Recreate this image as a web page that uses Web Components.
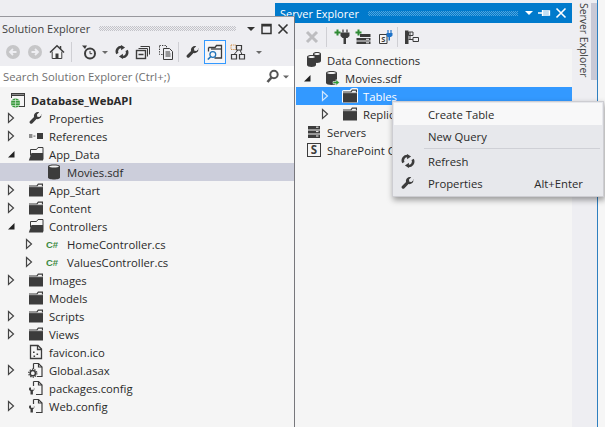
<!DOCTYPE html>
<html>
<head>
<meta charset="utf-8">
<title>Solution Explorer</title>
<style>
  html, body { margin: 0; padding: 0; height: 100%; overflow: hidden; background: #eeeef2; }
  body { font: 11.3px "Open Sans", "Liberation Sans", sans-serif; color: #2a2a2a; }
</style>
</head>
<body>
<vs-desktop>
  <vs-pane slot="server" heading="Server Explorer" active pins="pin">
    <tool-bar slot="toolbar" lead="26" top="2">
      <tool-btn icon="x-gray"></tool-btn>
      <tool-sep></tool-sep>
      <tool-btn icon="plug-add" style="margin-left:2px"></tool-btn>
      <tool-btn icon="server-add" style="margin-left:-1px"></tool-btn>
      <tool-btn icon="sp-plug"></tool-btn>
      <tool-sep style="margin-left:1px"></tool-sep>
      <tool-btn icon="hierarchy" style="margin-left:1px"></tool-btn>
    </tool-bar>
    <tree-view lead="21" top="2">
      <tree-row depth="-1" icon="dbs">Data Connections</tree-row>
      <tree-row depth="0" arrow="open" icon="db-link">Movies.sdf</tree-row>
      <tree-row depth="1" arrow="closed" icon="folder" selected="blue">Tables</tree-row>
      <tree-row depth="1" arrow="closed" icon="folder">Replication</tree-row>
      <tree-row depth="-1" icon="servers">Servers</tree-row>
      <tree-row depth="-1" icon="sharepoint">SharePoint Connections</tree-row>
    </tree-view>
  </vs-pane>

  <vs-pane slot="solution" heading="Solution Explorer" pins="max">
    <tool-bar slot="toolbar" lead="2" top="0">
      <tool-btn icon="back"></tool-btn>
      <tool-btn icon="forward"></tool-btn>
      <tool-btn icon="home"></tool-btn>
      <tool-sep></tool-sep>
      <tool-btn icon="history" style="margin-left:4px"></tool-btn>
      <tool-drop></tool-drop>
      <tool-btn icon="sync" style="margin-left:1px"></tool-btn>
      <tool-btn icon="collapse" style="margin-left:-1px"></tool-btn>
      <tool-btn icon="show-all" style="margin-left:1px"></tool-btn>
      <tool-sep style="margin-left:1px"></tool-sep>
      <tool-btn icon="wrench" style="margin-left:1px"></tool-btn>
      <tool-btn icon="folder-search" active></tool-btn>
      <tool-btn icon="diagram" style="margin-left:1px"></tool-btn>
      <tool-drop style="margin-left:5px"></tool-drop>
    </tool-bar>
    <search-box slot="toolbar">Search Solution Explorer (Ctrl+;)</search-box>
    <tree-view lead="0" top="4">
      <tree-row depth="-1" icon="project" bold>Database_WebAPI</tree-row>
      <tree-row depth="0" arrow="closed" icon="wrench">Properties</tree-row>
      <tree-row depth="0" arrow="closed" icon="refs">References</tree-row>
      <tree-row depth="0" arrow="open" icon="folder-open">App_Data</tree-row>
      <tree-row depth="1" icon="db" selected="gray">Movies.sdf</tree-row>
      <tree-row depth="0" arrow="closed" icon="folder">App_Start</tree-row>
      <tree-row depth="0" arrow="closed" icon="folder">Content</tree-row>
      <tree-row depth="0" arrow="open" icon="folder-open">Controllers</tree-row>
      <tree-row depth="1" arrow="closed" icon="csharp">HomeController.cs</tree-row>
      <tree-row depth="1" arrow="closed" icon="csharp">ValuesController.cs</tree-row>
      <tree-row depth="0" arrow="closed" icon="folder">Images</tree-row>
      <tree-row depth="0" icon="folder">Models</tree-row>
      <tree-row depth="0" arrow="closed" icon="folder">Scripts</tree-row>
      <tree-row depth="0" arrow="closed" icon="folder">Views</tree-row>
      <tree-row depth="0" icon="page">favicon.ico</tree-row>
      <tree-row depth="0" arrow="closed" icon="page-gear">Global.asax</tree-row>
      <tree-row depth="0" icon="page-wrench">packages.config</tree-row>
      <tree-row depth="0" arrow="closed" icon="page-wrench">Web.config</tree-row>
    </tree-view>
  </vs-pane>

  <context-menu slot="menu">
    <menu-item hot>Create Table</menu-item>
    <menu-item>New Query</menu-item>
    <menu-sep></menu-sep>
    <menu-item icon="sync">Refresh</menu-item>
    <menu-item icon="wrench" shortcut="Alt+Enter">Properties</menu-item>
  </context-menu>
</vs-desktop>

<script>
const DARK = '#3c3c3c';
const WRENCH = 'M14.8 4.2l-2.7 2.7-2.5-.5-.5-2.5 2.7-2.7c-1.7-.6-3.6-.2-4.9 1.1-1.2 1.2-1.6 2.9-1.2 4.4L1 11.4c-.8.8-.8 2 0 2.8s2 .8 2.8 0l4.8-4.9c1.5.4 3.2 0 4.4-1.2 1.3-1.3 1.7-3.2 1.1-4.9z';
const SYNC = `<g transform="translate(.8 .8) scale(.9)"><path d="M8.2 2.6a5 5 0 0 0-5.4 7.2" fill="none" stroke="${DARK}" stroke-width="2.8"/><path d="M7.8 13.4a5 5 0 0 0 5.4-7.2" fill="none" stroke="${DARK}" stroke-width="2.8"/><path d="M7 .2l4.4 2.9L7 6zM9 10l-4.4 2.9L9 15.8z" fill="${DARK}"/></g>`;
const PAGE = `<path d="M2.5 1.500h7.500l3.500 3.500v9.500h-11z" fill="#f5f5f5" stroke="${DARK}" stroke-width="1.300"/><path d="M9.500 1.500V5.500H13.500" fill="none" stroke="${DARK}" stroke-width="1.300"/>`;
const CYL = (x, y, w, h) => `<path d="M${x} ${y + 2}c0-2.6 ${w}-2.6 ${w} 0v${h - 4}c0 2.6-${w} 2.6-${w} 0z" fill="${DARK}"/><path d="M${x + 1.2} ${y + 2}c.6-1.3 ${w - 2.4}-1.3 ${w - 2.4} 0s-${w - 2.4} 1.3-${w - 2.4} 0z" fill="#f2f2f2"/>`;
const PLUS = (x, y) => `<path d="M${x} ${y - 3}v6M${x - 3} ${y}h6" stroke="#2f8a34" stroke-width="2"/>`;

const ICONS = {
  folder: `<path d="M1 3.5h7.5L10 1.5h5v13H1z" fill="${DARK}"/><path d="M9.4 4.4l1.1-1.7h3.4v1.7z" fill="#f5f5f5"/><path d="M1 4.7h14" stroke="#f5f5f5" stroke-width=".6"/>`,
  'folder-open': `<path d="M2.5 3.5h6L10 1.5h5v12" fill="#f5f5f5" stroke="${DARK}"/><path d="M3.5 7h11.5v7.5H.8z" fill="${DARK}"/><path d="M2.5 3.5v6" stroke="${DARK}"/>`,
  db: CYL(2, 0.5, 12, 15),
  dbs: CYL(7, 0, 8, 11) + CYL(1, 3, 9, 12),
  'db-link': CYL(2, 1, 11, 14) + `<path d="M9 11.5h3V9.5l3.5 3-3.5 3v-2H9z" fill="#2f9a34" stroke="#f5f5f5" stroke-width=".6"/>`,
  servers: `<path d="M2 2h12v3.4H2zM2 6.4h12v3.2H2zM2 10.6h12V14H2z" fill="${DARK}"/><path d="M10 3.2h2.5M10 7.6h2.5M10 12h2.5" stroke="#f5f5f5"/>`,
  sharepoint: `<rect x="1.5" y="1.5" width="13" height="13" fill="#f5f5f5" stroke="${DARK}"/><text x="8" y="12.4" font-size="11.5" font-weight="700" text-anchor="middle" fill="${DARK}" font-family="Open Sans">S</text>`,
  csharp: `<text x="0" y="12" font-size="9.5" font-weight="700" fill="#3b8a3f" font-family="Liberation Sans">C#</text>`,
  project: `<path d="M1 1h14v14H9v-1h5V4H2v2H1z" fill="${DARK}"/><path d="M2 2h12v1H2z" fill="#8a8a8a"/><circle cx="5.5" cy="11" r="4.6" fill="#3a9a3e"/><path d="M1 11h9M5.5 6.5v9M2 8.500h7M2 13.500h7" stroke="#d4ecd4" stroke-width=".7"/>`,
  wrench: `<path transform="translate(1.200 1.200) scale(.85)" d="${WRENCH}" fill="${DARK}"/>`,
  refs: `<path d="M1 6h3.4v4H1z" fill="#8c8c8c"/><path d="M5.4 7.5h2v1.2h-2z" fill="#777"/><path d="M9 5h6v6H9z" fill="${DARK}"/>`,
  page: PAGE + `<path d="M5 7.500h1.600v1.600H5zM8.500 9.500h1.600v1.600H8.500zM5.500 11.500h1.600v1.400H5.500z" fill="${DARK}"/>`,
  'page-gear': `<path d="M5.5 1.5h5l3.5 3.5v9.500H9" fill="#f5f5f5" stroke="${DARK}" stroke-width="1.200"/><path d="M10.5 1.5V5H14M5.5 1.5V7" fill="none" stroke="${DARK}" stroke-width="1.200"/><circle cx="4.8" cy="11.2" r="2.6" fill="none" stroke="${DARK}" stroke-width="1.5"/><circle cx="4.8" cy="11.2" r="4" fill="none" stroke="${DARK}" stroke-width="1.3" stroke-dasharray="1.3 1.2"/>`,
  'page-wrench': `<path d="M5.5 1.5h5l3.5 3.5v9.500H8" fill="#f5f5f5" stroke="${DARK}" stroke-width="1.200"/><path d="M10.5 1.5V5H14M5.5 1.5V6" fill="none" stroke="${DARK}" stroke-width="1.200"/><path d="M1.5 7.5c-1 1.5-.4 3 1 3.6v3.4h2.4v-3.4c1.4-.6 2-2.1 1-3.6v2.2H4.5L3 9.700V7.500z" fill="${DARK}"/>`,
  back: `<circle cx="8" cy="8" r="7" fill="#c6c6c8"/><path d="M11.500 8H5.500M8 5L5 8l3 3" fill="none" stroke="#eeeef2" stroke-width="1.800"/>`,
  forward: `<circle cx="8" cy="8" r="7" fill="#c6c6c8"/><path d="M4.500 8h6M8 5l3 3-3 3" fill="none" stroke="#eeeef2" stroke-width="1.800"/>`,
  home: `<path d="M1 8.500L8 1.800l7 6.700" fill="none" stroke="${DARK}" stroke-width="1.500"/><path d="M3.200 7.500v7h9.600v-7" fill="#f5f5f5" stroke="${DARK}"/><path d="M6.500 9.500h3v5h-3z" fill="${DARK}"/><path d="M11.500 2v3" stroke="${DARK}" stroke-width="1.500"/>`,
  history: `<circle cx="9" cy="9.500" r="5" fill="#eeeef2" stroke="${DARK}" stroke-width="2"/><path d="M9 7v2.700h2.200" fill="none" stroke="${DARK}"/><path d="M1 1.500h5L4 5z" fill="${DARK}"/>`,
  sync: SYNC,
  collapse: `<path d="M5.500 2.500h9v8" fill="none" stroke="${DARK}"/><path d="M3.500 4.500h9v8" fill="none" stroke="${DARK}"/><rect x="1.500" y="6.500" width="9" height="8" fill="#eeeef2" stroke="${DARK}" stroke-width="1.400"/><path d="M3.500 10.500h5" stroke="${DARK}" stroke-width="1.500"/>`,
  'show-all': `<path d="M1.500 1.500h7v9h-7z" fill="none" stroke="${DARK}" stroke-dasharray="1.300 1.200"/><path d="M5.500 4.500h6l3 3v8h-9z" fill="#eeeef2" stroke="${DARK}"/><path d="M7.500 8h4.500M7.500 10h5M7.500 12h5" stroke="${DARK}"/>`,
  'folder-search': `<path d="M1.500 3.500h6.500l1.500-2h5v12.500h-7" fill="none" stroke="${DARK}" stroke-width="1.300"/><path d="M1.500 3.500v4" stroke="${DARK}" stroke-width="1.300"/><path d="M4 5h10" stroke="${DARK}" stroke-width="1.300"/><circle cx="5.800" cy="10.500" r="2.900" fill="none" stroke="#1e72b8" stroke-width="1.300"/><path d="M3.600 12.700L.800 15.500" stroke="#1e72b8" stroke-width="1.600"/>`,
  diagram: `<path d="M1 1h5v4.500H1z" fill="none" stroke="#d08a3c" stroke-dasharray="1.200 1"/><path d="M6.500 1.500h5v4.500h-5zM1.500 10.500h5v4.500h-5zM9.500 10.500h5v4.500h-5z" fill="none" stroke="${DARK}" stroke-width="1.200"/><path d="M8 6L4 10.500M10 6l2 4.500" stroke="${DARK}"/>`,
  'x-gray': `<path d="M3 3l10 10M13 3L3 13" stroke="#bdbdc0" stroke-width="3"/>`,
  'plug-add': PLUS(3.500, 3.500) + `<path d="M6.500 3.500h9V7l-2 2h-1.500v6H9.500V9H8.500l-2-2z" fill="${DARK}"/><path d="M9 .5v3M13 .5v3" stroke="${DARK}" stroke-width="1.300"/>`,
  'server-add': PLUS(3.500, 3.500) + `<path d="M5 5h10.500v3H5zM1.500 9h14v2.600h-14zM1.500 12.500h14V15h-14z" fill="${DARK}"/><path d="M11 10.300h3M11 13.800h3" stroke="#f0f0f4"/>`,
  'sp-plug': `<path d="M2.500 5.500H10v9H2.500z" fill="#f5f5f5" stroke="${DARK}"/><text x="6.200" y="13" font-size="7.500" font-weight="700" text-anchor="middle" fill="${DARK}" font-family="Open Sans">S</text><path d="M9.500 4h6v2.500l-1.500 1.500h-1v3.500h-1.500V8h-1L9.500 6.500z" fill="#1e72c8"/><path d="M11 1v3M14 1v3" stroke="#1e72c8" stroke-width="1.200"/>`,
  hierarchy: `<path d="M1 1.500h3.500V15H1z" fill="${DARK}"/><path d="M4.500 3H9v3.500H4.500zM9 8.500h5.500v4H9zM4.500 10.500H9" fill="none" stroke="${DARK}"/><path d="M6 3v7.500" stroke="${DARK}"/>`,
};

const svgIcon = name => `<svg viewBox="0 0 16 16" width="16" height="16" aria-hidden="true">${ICONS[name] || ''}</svg>`;

// the surface everything sits on; the two tool windows overlap like on a real desktop
const desktopTemplate = document.createElement('template');
desktopTemplate.innerHTML = `
  <style>
    :host { display: block; position: relative; width: 605px; height: 427px; overflow: hidden; background: #eeeef2; }
    .solution { position: absolute; left: 0; top: 16px; width: 295px; bottom: 0; z-index: 2; }
    .dock { position: absolute; left: 275px; top: 0; right: 0; bottom: 0; display: flex; }
    .server { width: 297px; margin-top: 3px; display: flex; }
    .strip { width: 25px; display: flex; padding: 3px 0 0 3px; box-sizing: border-box; }
    .strip span { writing-mode: vertical-rl; font-size: 10.4px; line-height: 14px; color: #3e3e3e; white-space: nowrap; flex: 1; }
    .strip i { width: 6px; height: 77px; background: #c9c9d6; flex: none; }
    .edge { flex: 1; border-left: 1px solid #2e7fc0; background: #f6f6f6; }
    .menu { position: absolute; left: 392px; top: 101px; z-index: 3; }
  </style>
  <div class="dock">
    <div class="server"><slot name="server"></slot></div>
    <div class="strip"><span>Server Explorer</span><i></i></div>
    <div class="edge"></div>
  </div>
  <div class="solution"><slot name="solution"></slot></div>
  <div class="menu"><slot name="menu"></slot></div>`;

class VsDesktop extends HTMLElement {
  constructor() {
    super();
    this.attachShadow({mode: 'open'});
    this.shadowRoot.appendChild(desktopTemplate.content.cloneNode(true));
  }
}
customElements.define('vs-desktop', VsDesktop);

const paneTemplate = document.createElement('template');
paneTemplate.innerHTML = `
  <style>
    :host { display: flex; flex-direction: column; flex: 1; height: 100%; box-sizing: border-box; background: #eeeef2; min-width: 0; }
    :host([pins="max"]) { border-top: 1px solid #98989e; border-right: 1px solid #77777c; }
    header { display: flex; align-items: center; height: 23px; padding: 0 5px 0 2px; color: #3f3f3f; font-size: 11px; flex: none; }
    :host([active]) header { height: 20px; background: #007acc; color: #fff; padding-left: 5px; }
    .dots { flex: 1; height: 5px; margin: 0 6px 0 9px; background: conic-gradient(#c2c2c8 25%, transparent 0 50%, #c2c2c8 0 75%, transparent 0) 0 0 / 2px 2px; }
    :host([active]) .dots { margin-right: 2px; background-image: conic-gradient(#52a5dc 25%, transparent 0 50%, #52a5dc 0 75%, transparent 0); }
    svg { display: block; flex: none; margin-left: 4px; }
    .body { flex: 1; display: flex; flex-direction: column; min-height: 0; }
  </style>
  <header>
    <span id="heading"></span><span class="dots"></span>
    <span id="ctl" style="display:flex;align-items:center"></span>
  </header>
  <slot name="toolbar"></slot>
  <div class="body"><slot></slot></div>`;

class VsPane extends HTMLElement {
  constructor() {
    super();
    this.attachShadow({mode: 'open'});
    this.shadowRoot.appendChild(paneTemplate.content.cloneNode(true));
  }

  connectedCallback() {
    this.shadowRoot.querySelector('#heading').textContent = this.getAttribute('heading');
    const c = this.hasAttribute('active') ? '#fff' : '#333';
    const drop = `<svg width="10" height="16" viewBox="0 0 10 16"><path d="M1 6h8l-4 4z" fill="${c}"/></svg>`;
    const mid = this.getAttribute('pins') === 'pin'
      ? `<svg width="13" height="16" viewBox="0 0 13 16"><path d="M0 8h4M4.500 5v6M4.500 6h7v4h-7M4.500 8h7" fill="none" stroke="${c}" stroke-width="1.300"/></svg>`
      : `<svg width="13" height="16" viewBox="0 0 13 16"><rect x="2" y="3.500" width="9" height="9" fill="none" stroke="${c}" stroke-width="1.500"/><path d="M2 4.500h9" stroke="${c}" stroke-width="2"/></svg>`;
    const close = `<svg width="12" height="16" viewBox="0 0 12 16"><path d="M1.500 3.500l9 9M10.500 3.500l-9 9" stroke="${c}" stroke-width="1.600"/></svg>`;
    this.shadowRoot.querySelector('#ctl').innerHTML = drop + mid + close;
  }
}
customElements.define('vs-pane', VsPane);

class ToolBar extends HTMLElement {
  constructor() {
    super();
    this.attachShadow({mode: 'open'});
    this.shadowRoot.innerHTML = `
      <style>
        :host { display: flex; align-items: flex-start; height: 26px; box-sizing: border-box; background: #eeeef2; }
      </style>
      <slot></slot>`;
  }

  connectedCallback() {
    this.style.paddingLeft = (this.getAttribute('lead') || 0) + 'px';
    this.style.paddingTop = (this.getAttribute('top') || 0) + 'px';
  }
}
customElements.define('tool-bar', ToolBar);

class ToolBtn extends HTMLElement {
  constructor() {
    super();
    this.attachShadow({mode: 'open'});
  }

  connectedCallback() {
    this.shadowRoot.innerHTML = `
      <style>
        :host { display: flex; align-items: center; justify-content: center; width: 22px; height: 24px; box-sizing: border-box; flex: none; }
        :host([active]) { border: 1px solid #3399ff; background: #f6f6f8; }
        svg { display: block; }
      </style>
      ${svgIcon(this.getAttribute('icon'))}`;
  }
}
customElements.define('tool-btn', ToolBtn);

class ToolSep extends HTMLElement {
  constructor() {
    super();
    this.attachShadow({mode: 'open'});
    this.shadowRoot.innerHTML = `
      <style>
        :host { display: block; width: 1px; height: 20px; margin: 2px 2px 0 3px; background: #cfcfd4; flex: none; }
      </style>`;
  }
}
customElements.define('tool-sep', ToolSep);

class ToolDrop extends HTMLElement {
  constructor() {
    super();
    this.attachShadow({mode: 'open'});
    this.shadowRoot.innerHTML = `
      <style>
        :host { display: flex; align-items: center; justify-content: center; width: 10px; height: 24px; flex: none; }
        i { width: 0; height: 0; border: 3px solid transparent; border-top: 3px solid #6a6a6a; border-bottom: 0; }
      </style>
      <i></i>`;
  }
}
customElements.define('tool-drop', ToolDrop);

class SearchBox extends HTMLElement {
  constructor() {
    super();
    this.attachShadow({mode: 'open'});
    this.shadowRoot.innerHTML = `
      <style>
        :host { display: flex; align-items: center; height: 21px; background: #fff; padding: 0 4px 0 3px; color: #6f6f6f; font-size: 11.3px; }
        .grow { flex: 1; white-space: nowrap; }
        svg { display: block; }
      </style>
      <span class="grow"><slot></slot></span>
      <svg width="15" height="15" viewBox="0 0 15 15"><circle cx="9" cy="5.500" r="3.700" fill="none" stroke="#555" stroke-width="2"/><path d="M6.500 8.500L2.500 13" stroke="#555" stroke-width="2.600"/></svg>
      <svg width="9" height="15" viewBox="0 0 9 15" style="margin-left:1px"><path d="M2 6.500h6l-3 3z" fill="#666"/></svg>`;
  }
}
customElements.define('search-box', SearchBox);

class TreeView extends HTMLElement {
  constructor() {
    super();
    this.attachShadow({mode: 'open'});
    this.shadowRoot.innerHTML = `
      <style>
        :host { display: block; flex: 1; background: #f5f5f5; overflow: hidden; }
      </style>
      <slot></slot>`;
  }

  connectedCallback() {
    this.style.paddingLeft = (this.getAttribute('lead') || 0) + 'px';
    this.style.paddingTop = (this.getAttribute('top') || 0) + 'px';
  }
}
customElements.define('tree-view', TreeView);

class TreeRow extends HTMLElement {
  constructor() {
    super();
    this.attachShadow({mode: 'open'});
  }

  connectedCallback() {
    const depth = Number(this.getAttribute('depth') || 0);
    const arrow = this.getAttribute('arrow');
    const light = this.getAttribute('selected') === 'blue';
    let glyph = '';
    if (arrow === 'closed') {
      glyph = `<svg width="8" height="12" viewBox="0 0 8 12"><path d="M1.500 1.500l5 4.500-5 4.500z" fill="none" stroke="${light ? '#cfe6ff' : '#444'}" stroke-width="1.200"/></svg>`;
    } else if (arrow === 'open') {
      glyph = `<svg width="8" height="12" viewBox="0 0 8 12"><path d="M7.500 3v6.500H1z" fill="#222"/></svg>`;
    }
    this.shadowRoot.innerHTML = `
      <style>
        :host { display: block; height: 18px; }
        :host([selected="gray"]) { background: #cccedb; }
        :host([selected="blue"]) { background: #3399ff; color: #fff; }
        :host([bold]) { font-weight: 700; }
        .row { display: flex; align-items: center; height: 18px; white-space: nowrap; }
        .arrow { width: 18px; display: flex; justify-content: center; flex: none; }
        .icon { margin: 0 5px 0 8px; flex: none; display: block; }
        :host([selected="blue"]) .icon { filter: drop-shadow(1px 0 0 #fff) drop-shadow(-1px 0 0 #fff) drop-shadow(0 -1px 0 #fff); }
        svg { display: block; }
      </style>
      <div class="row" style="margin-left:${2 + depth * 18}px">
        <span class="arrow">${glyph}</span>
        <span class="icon">${svgIcon(this.getAttribute('icon'))}</span>
        <span class="label"><slot></slot></span>
      </div>`;
  }
}
customElements.define('tree-row', TreeRow);

class ContextMenu extends HTMLElement {
  constructor() {
    super();
    this.attachShadow({mode: 'open'});
    this.shadowRoot.innerHTML = `
      <style>
        :host { display: block; width: 212px; box-sizing: border-box; padding: 1px 1px 2px; background: #e7e8ec; border: 1px solid #cdcdd2; box-shadow: 1px 3px 6px rgba(0, 0, 0, .38); }
      </style>
      <slot></slot>`;
  }
}
customElements.define('context-menu', ContextMenu);

class MenuItem extends HTMLElement {
  constructor() {
    super();
    this.attachShadow({mode: 'open'});
  }

  connectedCallback() {
    const icon = this.getAttribute('icon');
    this.shadowRoot.innerHTML = `
      <style>
        :host { display: flex; align-items: center; height: 22px; white-space: nowrap; }
        :host([hot]) { background: #f8f8f9; }
        .gutter { width: 34px; flex: none; display: flex; justify-content: center; padding-right: 7px; box-sizing: border-box; }
        .label { flex: 1; }
        .key { padding-right: 19px; }
        svg { display: block; }
      </style>
      <span class="gutter">${icon ? svgIcon(icon) : ''}</span>
      <span class="label"><slot></slot></span>
      <span class="key">${this.getAttribute('shortcut') || ''}</span>`;
  }
}
customElements.define('menu-item', MenuItem);

class MenuSep extends HTMLElement {
  constructor() {
    super();
    this.attachShadow({mode: 'open'});
    this.shadowRoot.innerHTML = `
      <style>
        :host { display: block; height: 1px; margin: 1px 2px 1px 30px; background: #cfd0d6; }
      </style>`;
  }
}
customElements.define('menu-sep', MenuSep);
</script>
</body>
</html>
